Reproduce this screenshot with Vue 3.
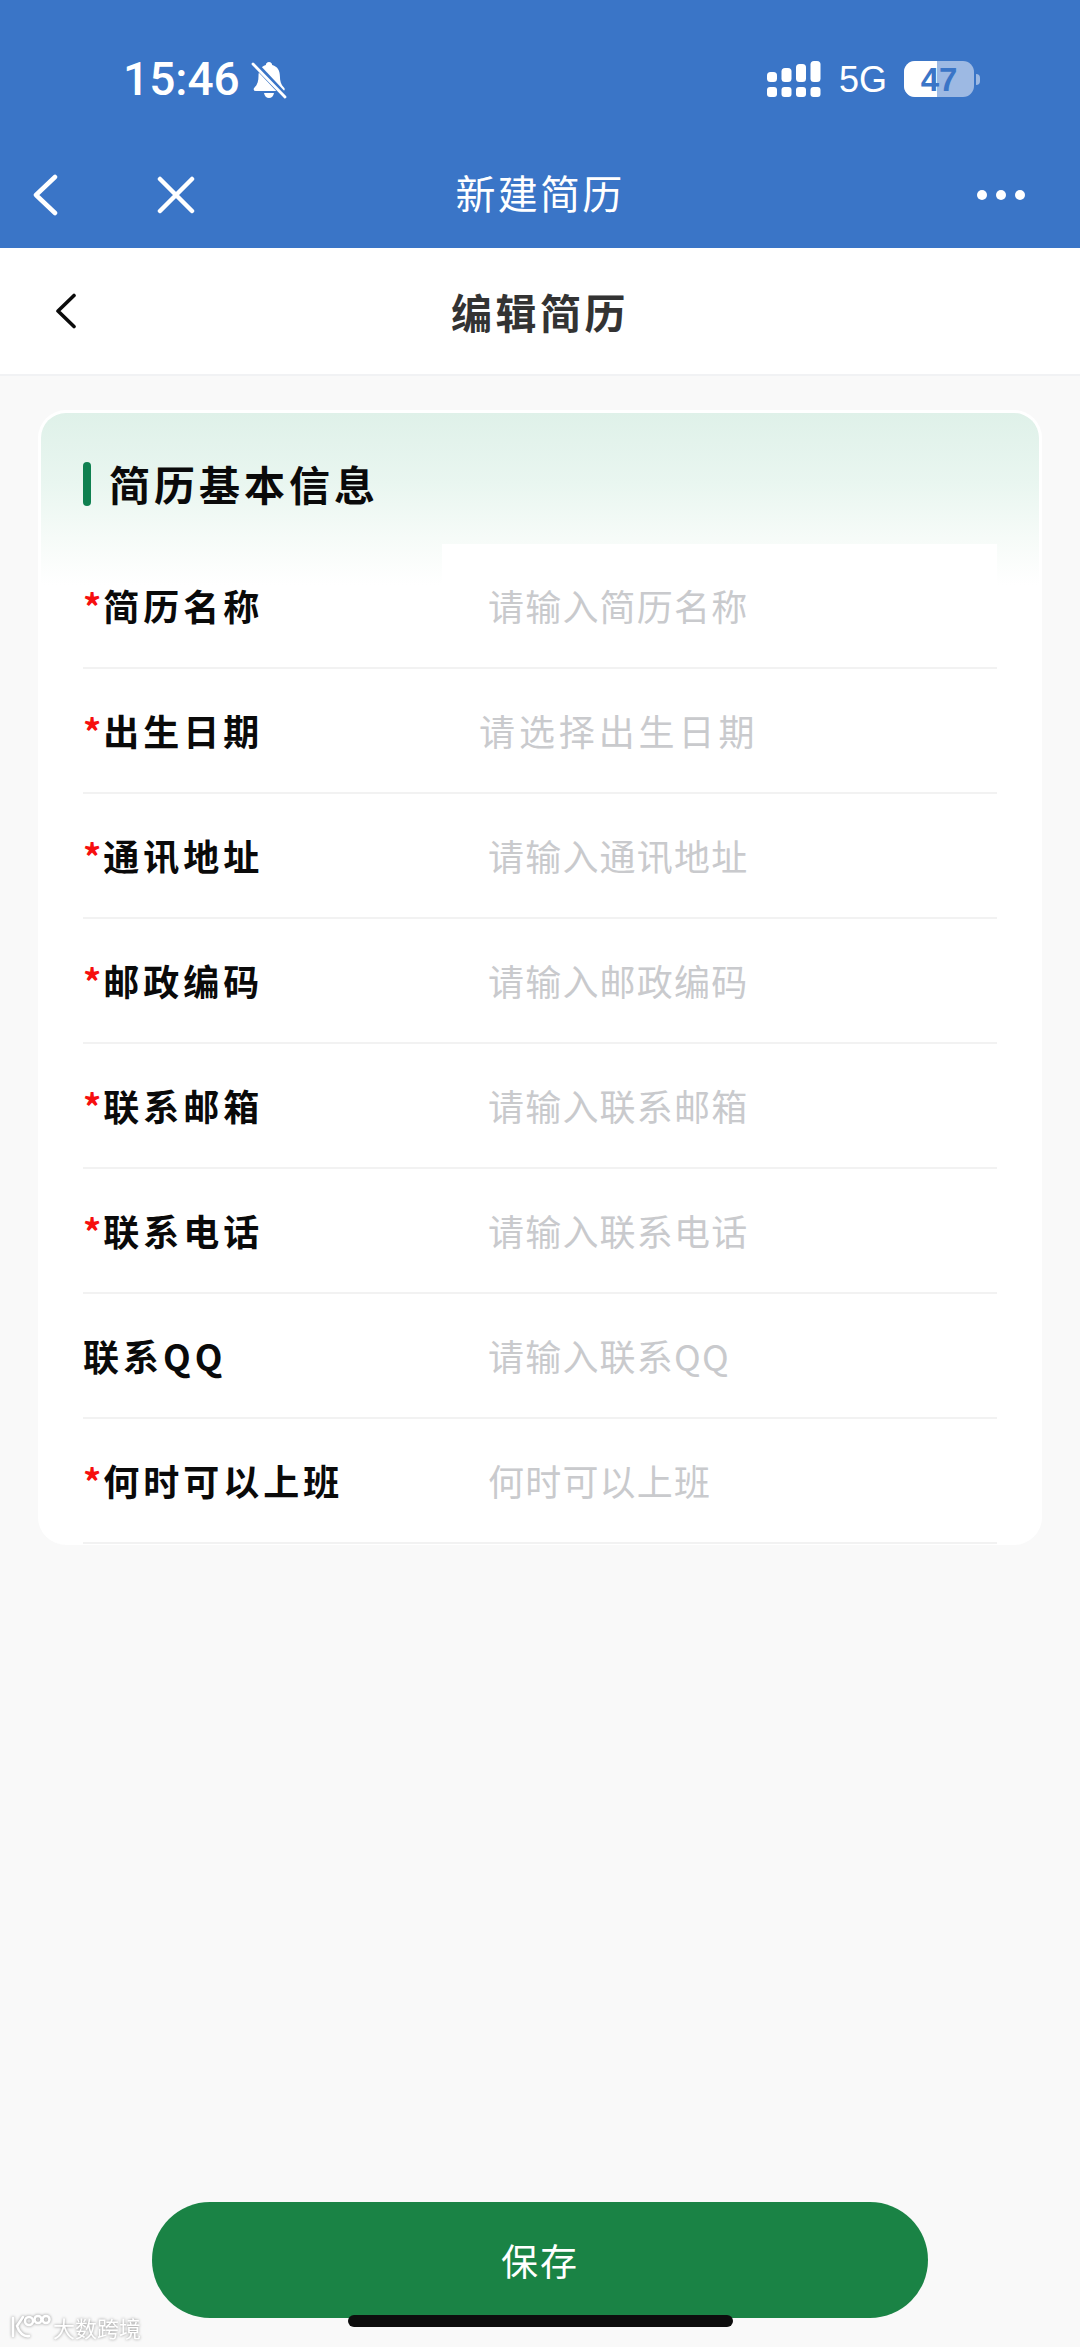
<script setup>
const rows = [
  { label: '简历名称', hint: '请输入简历名称', required: true },
  { label: '出生日期', hint: '请选择出生日期', required: true, picker: true },
  { label: '通讯地址', hint: '请输入通讯地址', required: true },
  { label: '邮政编码', hint: '请输入邮政编码', required: true },
  { label: '联系邮箱', hint: '请输入联系邮箱', required: true },
  { label: '联系电话', hint: '请输入联系电话', required: true },
  { label: '联系QQ', hint: '请输入联系QQ', required: false },
  { label: '何时可以上班', hint: '何时可以上班', required: true },
]
const signal = [
  { x: 0, y: 11, h: 10 }, { x: 14.5, y: 7, h: 14 }, { x: 29, y: 3, h: 18 }, { x: 43.5, y: 0, h: 21 },
]
</script>

<template>
  <div class="page">
    <header class="top">
      <div class="status">
        <div class="status-left">
          <span class="time">15:46</span>
          <svg class="bell" width="36" height="38" viewBox="0 0 36 38">
            <path fill="#fff" d="M18 1c-2 0-3 1.400-3.200 3C9.500 5.500 7.500 10 7.500 15c0 5-1 8.500-4 11.500-1.500 1.500-.8 3.500 1.200 3.500h27c2 0 2.700-2 1.200-3.500-3-3-4-6.500-4-11.500 0-5-2-9.500-7.700-11C21 2.400 20 1 18 1z"/>
            <path fill="#fff" d="M13 32h10c-.5 3-2.500 5-5 5s-4.500-2-5-5z"/>
            <path stroke="#3a75c7" stroke-width="6" d="M2 1l34 36"/>
            <path stroke="#fff" stroke-width="2.800" stroke-linecap="round" d="M2 3l32 33"/>
          </svg>
        </div>
        <div class="status-right">
          <svg width="54" height="36" viewBox="0 0 54 36">
            <rect v-for="b in signal" :key="b.x" :x="b.x" :y="b.y" width="10" :height="b.h" rx="3.500" fill="#fff"/>
            <rect v-for="b in signal" :key="'d' + b.x" :x="b.x" y="26" width="10" height="10" rx="3" fill="#fff"/>
          </svg>
          <span class="net">5G</span>
          <div class="battery">
            <div class="cell">
              <span class="level"></span>
              <span class="pct">47</span>
            </div>
            <span class="nub"></span>
          </div>
        </div>
      </div>
      <nav class="nav">
        <div class="nav-left">
          <svg width="26" height="42" viewBox="0 0 26 42" fill="none" stroke="#fff" stroke-width="4.500" stroke-linecap="round" stroke-linejoin="round">
            <path d="M23 3L4 21l19 18"/>
          </svg>
          <svg class="close" width="38" height="38" viewBox="0 0 38 38" fill="none" stroke="#fff" stroke-width="4.500" stroke-linecap="round">
            <path d="M3 3l32 32M35 3L3 35"/>
          </svg>
        </div>
        <h1 class="nav-title">新建简历</h1>
        <div class="nav-right">
          <span class="dot"></span><span class="dot"></span><span class="dot"></span>
        </div>
      </nav>
    </header>

    <div class="subhead">
      <svg class="sub-back" width="22" height="36" viewBox="0 0 22 36" fill="none" stroke="#0b0b0b" stroke-width="3.600" stroke-linecap="round" stroke-linejoin="round">
        <path d="M19 2.500L3 18l16 15.500"/>
      </svg>
      <h2 class="sub-title">编辑简历</h2>
      <span></span>
    </div>

    <section class="card">
      <div class="card-head">
        <span class="accent"></span>
        <span class="card-title">简历基本信息</span>
      </div>
      <div v-for="r in rows" :key="r.label" class="row">
        <div class="label"><span v-if="r.required" class="star">*</span>{{ r.label }}</div>
        <div class="field" :class="{ picker: r.picker }">{{ r.hint }}</div>
      </div>
    </section>

    <div class="foot">
      <button class="save" type="button">保存</button>
    </div>

    <div class="home"></div>
    <div class="mark">
      <svg width="42" height="26" viewBox="0 0 42 26" fill="none" stroke="#fff" stroke-width="2.600" stroke-linecap="round">
        <path d="M3 4v18M13 3L7 12c2 7 7 11 12 10"/>
        <circle cx="19" cy="7" r="4"/>
        <circle cx="28" cy="5.500" r="3.500"/>
        <circle cx="36" cy="5.500" r="3.500"/>
      </svg>
      <span>大数跨境</span>
    </div>
  </div>
</template>

<style>
html, body { margin: 0; padding: 0; background: #f9f9f9; }
</style>

<style scoped>
.page {
  position: relative;
  width: 1080px;
  height: 2347px;
  overflow: hidden;
  display: flex;
  flex-direction: column;
  background: #f9f9f9;
  font-family: "Noto Sans CJK SC", "Noto Sans", sans-serif;
}
.top {
  height: 248px;
  flex: none;
  background: #3a75c7;
  color: #fff;
}
.status {
  height: 158px;
  box-sizing: border-box;
  padding: 61px 100px 0 123px;
  display: flex;
  justify-content: space-between;
  align-items: flex-start;
}
.status-left { display: flex; align-items: center; height: 36px; }
.time {
  font-family: Roboto, "Liberation Sans", sans-serif;
  font-weight: 500;
  font-size: 46px;
  line-height: 36px;
  width: 128px;
}
.bell { display: block; margin-top: 1px; }
.status-right { display: flex; align-items: center; height: 36px; }
.net {
  margin-left: 18px;
  width: 65px;
  font-family: "Liberation Sans", Arial, sans-serif;
  font-size: 36px;
  line-height: 37px;
}
.battery { display: flex; align-items: center; }
.cell {
  position: relative;
  width: 70px;
  height: 36px;
  border-radius: 11px;
  background: #9db9e3;
  overflow: hidden;
}
.level {
  position: absolute;
  left: 0;
  top: 0;
  bottom: 0;
  width: 33px;
  background: #fff;
}
.pct {
  position: absolute;
  inset: 0;
  text-align: center;
  font-family: "Liberation Sans", Arial, sans-serif;
  font-weight: 700;
  font-size: 33px;
  line-height: 37px;
  color: #3a75c7;
}
.nub {
  width: 4px;
  height: 11px;
  margin-left: 2px;
  border-radius: 0 4px 4px 0;
  background: #9db9e3;
}
.nav {
  height: 74px;
  padding: 0 55px 0 32px;
  display: grid;
  grid-template-columns: minmax(0, 1fr) auto minmax(0, 1fr);
  align-items: center;
}
.nav-left { display: flex; align-items: center; }
.close { margin-left: 99px; }
.nav-title {
  margin: 0 0 5px 23px;
  font-size: 40px;
  font-weight: 400;
  letter-spacing: 2.300px;
  line-height: 69px;
}
.nav-right { display: flex; justify-content: flex-end; gap: 9px; }
.dot { width: 10px; height: 10px; border-radius: 50%; background: #fff; }

.subhead {
  height: 128px;
  flex: none;
  box-sizing: border-box;
  padding: 0 55px;
  border-bottom: 2px solid #f1f2f4;
  background: #fff;
  display: grid;
  grid-template-columns: minmax(0, 1fr) auto minmax(0, 1fr);
  align-items: center;
}
.sub-back { display: block; }
.sub-title {
  margin: 0;
  font-size: 41px;
  font-weight: 700;
  letter-spacing: 3.500px;
  color: #333;
  line-height: 1;
}

.card {
  flex: none;
  box-sizing: border-box;
  width: 1004px;
  height: 1135px;
  margin: 34px 0 0 38px;
  padding: 0 42px;
  border: 3px solid #fff;
  border-bottom: 0;
  border-radius: 28px;
  background: linear-gradient(#dff1e9, #e9f6f0 70px, #f6fbf8 125px, #fff 172px);
  overflow: hidden;
}
.card-head {
  height: 131px;
  display: flex;
  align-items: flex-start;
  box-sizing: border-box;
  padding-top: 46px;
}
.accent {
  width: 8px;
  height: 44px;
  margin-top: 3px;
  border-radius: 4px;
  background: #0f8050;
  margin-right: 18px;
}
.card-title {
  font-size: 41px;
  font-weight: 700;
  letter-spacing: 4px;
  color: #0a0a0a;
  line-height: 48px;
}
.row {
  height: 125px;
  box-sizing: border-box;
  border-bottom: 2px solid #f2f2f2;
  display: flex;
}
.label {
  width: 359px;
  flex: none;
  padding-top: 36px;
  font-size: 36px;
  font-weight: 700;
  letter-spacing: 4px;
  line-height: 50px;
  color: #0a0a0a;
  white-space: nowrap;
}
.star { color: #f60f0f; letter-spacing: 2px; }
.field {
  flex: 1;
  background: #fff;
  padding: 36px 0 0 46px;
  font-size: 36px;
  letter-spacing: 1.200px;
  line-height: 50px;
  color: #c9cacd;
  white-space: nowrap;
}
.field.picker { padding-left: 37px; letter-spacing: 3.900px; }

.foot {
  margin-top: auto;
  padding-bottom: 29px;
  display: flex;
  justify-content: center;
}
.save {
  width: 776px;
  height: 116px;
  border: 0;
  border-radius: 58px;
  background: #1a8345;
  color: #fff;
  font-family: inherit;
  font-size: 37px;
  letter-spacing: 2px;
}
.home {
  position: absolute;
  left: 348px;
  top: 2315px;
  width: 385px;
  height: 12px;
  border-radius: 6px;
  background: #0d0d0d;
}
.mark {
  position: absolute;
  left: 10px;
  top: 2314px;
  display: flex;
  align-items: center;
  gap: 1px;
  color: #fff;
  font-size: 22px;
  line-height: 26px;
  filter: drop-shadow(0 0 1.500px #8f8f8f);
}
.mark svg { display: block; }
</style>
